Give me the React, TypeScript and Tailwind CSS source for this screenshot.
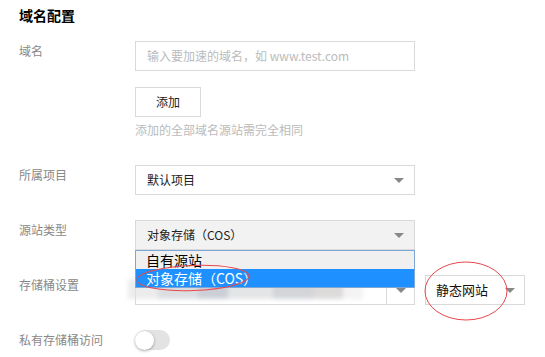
import React from 'react';

const font = { fontFamily: '"Noto Sans CJK SC", "Liberation Sans", sans-serif' };

const Arrow = () => (
  <span className="w-0 h-0 border-l-[5px] border-r-[5px] border-t-[5px] border-l-transparent border-r-transparent border-t-[#888]" />
);

const Label: React.FC<{ children: React.ReactNode }> = ({ children }) => (
  <div className="w-[116px] shrink-0 text-[12px] leading-[20px] text-[#888]">{children}</div>
);

export default function App() {
  return (
    <div className="relative w-[545px] h-[357px] overflow-hidden bg-white text-[#000]" style={font}>
      <div className="pl-[19px] pt-[5px]">
        <h1 className="text-[14px] leading-[20px] font-bold">域名配置</h1>

        {/* 域名 */}
        <div className="flex mt-[16px]">
          <Label>域名</Label>
          <div className="flex flex-col">
            <div className="w-[280px] h-[30px] border border-[#d9d9d9] flex items-center px-[11px] text-[12px] text-[#bbb]">
              输入要加速的域名，如 www.test.com
            </div>
            <button className="mt-[16px] w-[66px] h-[30px] border border-[#d9d9d9] bg-white text-[12px] text-[#222]">
              添加
            </button>
            <p className="mt-[4px] text-[12px] leading-[18px] text-[#bbb]">添加的全部域名源站需完全相同</p>
          </div>
        </div>

        {/* 所属项目 */}
        <div className="flex mt-[26px]">
          <Label>所属项目</Label>
          <div className="w-[280px] h-[30px] border border-[#d9d9d9] bg-white flex items-center justify-between pl-[11px] pr-[10px] text-[12px] text-[#222]">
            <span>默认项目</span>
            <Arrow />
          </div>
        </div>

        {/* 源站类型 */}
        <div className="flex mt-[25px]">
          <Label>源站类型</Label>
          <div className="w-[280px] h-[30px] border border-[#d9d9d9] bg-[#f2f2f2] flex items-center justify-between pl-[11px] pr-[10px] text-[12px] text-[#222]">
            <span>对象存储（COS）</span>
            <Arrow />
          </div>
        </div>

        {/* 存储桶设置 */}
        <div className="flex mt-[25px]">
          <Label>存储桶设置</Label>
          <div className="w-[280px] h-[30px] border border-[#d9d9d9] bg-white flex">
            <div className="flex-1" />
            <div className="w-[28px] border-l border-[#d9d9d9] flex items-center justify-center">
              <Arrow />
            </div>
          </div>
          <div className="ml-[10px] w-[100px] h-[30px] border border-[#d9d9d9] bg-white flex items-center justify-between pl-[10px] pr-[9px] text-[13px] text-[#111]">
            <span>静态网站</span>
            <Arrow />
          </div>
        </div>

        {/* 私有存储桶访问 */}
        <div className="flex mt-[25px]">
          <Label>私有存储桶访问</Label>
          <div className="w-[35px] h-[20px] rounded-full bg-[#e3e3e3] flex items-center">
            <div className="w-[19px] h-[19px] rounded-full bg-white shadow-[0_1px_3px_rgba(0,0,0,0.35)]" />
          </div>
        </div>
      </div>

      {/* blurred bucket name */}
      <div className="absolute left-[128px] top-[279px] flex blur-[2px] opacity-60">
        <div className="w-[30px] h-[20px] bg-[#e0e0e0]" />
        <div className="w-[40px] h-[20px] bg-[#c4c8ce]" />
        <div className="w-[30px] h-[20px] bg-[#aab1bb]" />
        <div className="w-[45px] h-[20px] bg-[#d2d4d8]" />
        <div className="w-[40px] h-[20px] bg-[#b6bac0]" />
        <div className="w-[30px] h-[20px] bg-[#c8c2c2]" />
        <div className="w-[20px] h-[20px] bg-[#ececec]" />
      </div>

      {/* open dropdown */}
      <div className="absolute left-[135px] top-[250px] w-[280px] border border-[#7ea6d6] text-[14px] leading-[18px]">
        <div className="bg-[#f0f0f0] pl-[10px] text-[#000]">自有源站</div>
        <div className="bg-[#1e90ff] pl-[10px] text-white">对象存储（COS）</div>
      </div>

      {/* red annotation ellipses */}
      <svg className="absolute left-0 top-0 pointer-events-none" width="545" height="357">
        <ellipse cx="193" cy="278" rx="56" ry="12.5" fill="none" stroke="#e8474c" strokeWidth="1" transform="rotate(-2 193 278)" />
        <ellipse cx="466" cy="291" rx="41" ry="29" fill="none" stroke="#e8474c" strokeWidth="1" />
      </svg>
    </div>
  );
}
